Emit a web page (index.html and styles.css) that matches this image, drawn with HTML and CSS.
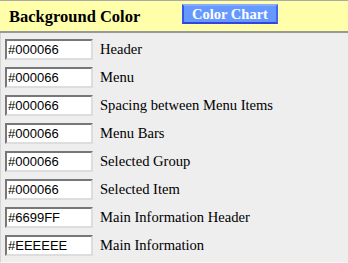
FILE: index.html
```html
<!DOCTYPE html>
<html lang="en">
<head>
    <meta charset="UTF-8">
    <title>Background Color</title>
    <link rel="stylesheet" href="styles.css">
</head>
<body>
    <div class="bar">
        <h1>Background Color</h1>
        <button class="chart">Color Chart</button>
    </div>
    <div class="list">
        <div class="row"><input class="swatch" type="text" value="#000066"><label>Header</label></div>
        <div class="row"><input class="swatch" type="text" value="#000066"><label>Menu</label></div>
        <div class="row"><input class="swatch" type="text" value="#000066"><label>Spacing between Menu Items</label></div>
        <div class="row"><input class="swatch" type="text" value="#000066"><label>Menu Bars</label></div>
        <div class="row"><input class="swatch" type="text" value="#000066"><label>Selected Group</label></div>
        <div class="row"><input class="swatch" type="text" value="#000066"><label>Selected Item</label></div>
        <div class="row"><input class="swatch" type="text" value="#6699FF"><label>Main Information Header</label></div>
        <div class="row"><input class="swatch" type="text" value="#EEEEEE"><label>Main Information</label></div>
    </div>
</body>
</html>
```

FILE: styles.css
```css
body {
    margin: 0;
    padding: 0;
    background: #eeeeee;
    font-family: "Liberation Serif", "Times New Roman", serif;
}
.bar {
    display: flex;
    align-items: flex-start;
    height: 30px;
    background: #ffffaa;
    border-top: 1px solid #aaaaaa;
    border-bottom: 2px solid #999999;
}
.bar h1 {
    flex: 0 0 173px;
    margin: 6px 0 0 9px;
    font-size: 16.5px;
    line-height: 20px;
    font-weight: bold;
    color: #000;
}
.chart {
    width: 96px;
    height: 20px;
    margin-top: 3px;
    padding: 0;
    background: #6699ff;
    color: #fff;
    font-family: "Liberation Serif", "Times New Roman", serif;
    font-size: 14.5px;
    font-weight: bold;
    line-height: 16px;
    border: 2px solid;
    border-color: #88aaff #4466ee #3344dd #3355ee;
}
.list {
    display: flex;
    flex-direction: column;
    gap: 7px;
    padding: 6px 0 6px 4px;
    border-left: 1px solid #d4d4d4;
    border-bottom: 1px dotted #ffffff;
}
.row {
    display: flex;
    align-items: center;
    gap: 7px;
}
.swatch {
    box-sizing: border-box;
    width: 88px;
    height: 21px;
    margin: 0;
    padding: 0 0 0 1px;
    font-family: "Liberation Sans", Arial, sans-serif;
    font-size: 13px;
    color: #000;
    background: #fff;
    border: 2px solid;
    border-color: #777777 #dddddd #dddddd #777777;
}
.row label {
    font-size: 14.6px;
    color: #000;
}
```
